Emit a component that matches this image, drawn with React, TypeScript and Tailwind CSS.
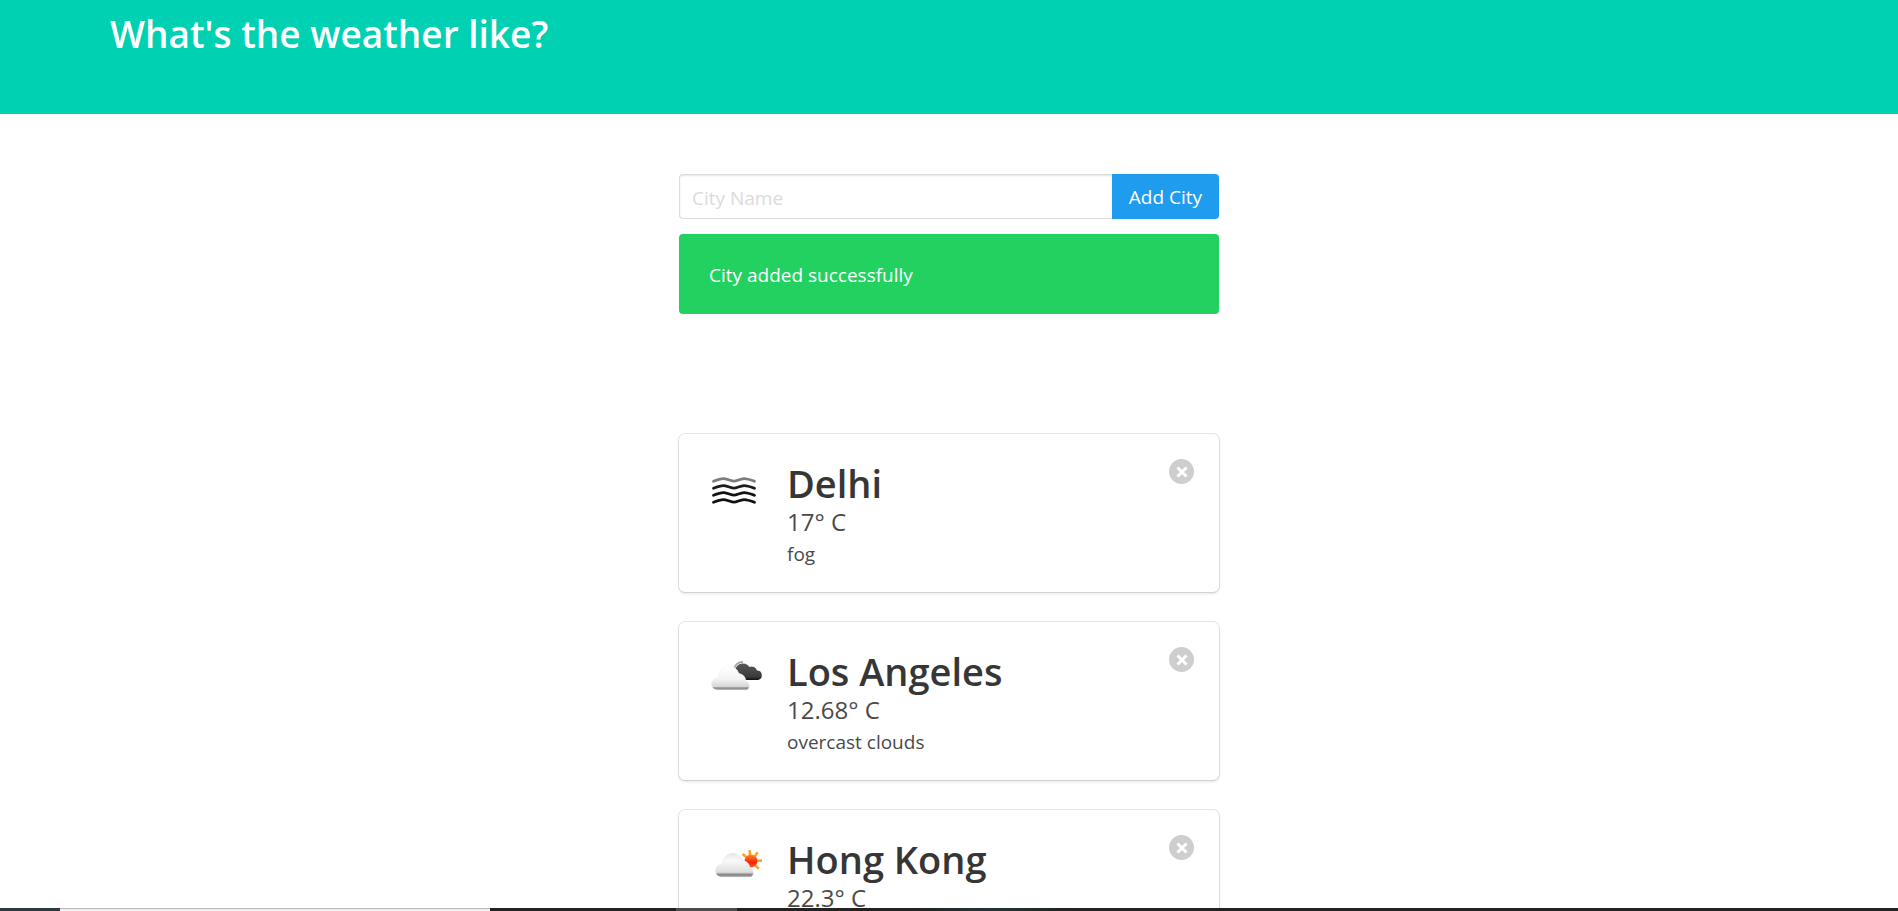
import React from "react";

type Icon = "fog" | "overcast" | "partly";
type City = { name: string; temp: string; text: string; icon: Icon };

const cities: City[] = [
  { name: "Delhi", temp: "17° C", text: "fog", icon: "fog" },
  { name: "Los Angeles", temp: "12.68° C", text: "overcast clouds", icon: "overcast" },
  { name: "Hong Kong", temp: "22.3° C", text: "scattered clouds", icon: "partly" },
];

function FogIcon() {
  const wave = "M4.500 1.200 C9 -0.6 12 -1.600 15 -1.400 C19 -1 22 1.200 25 1.200 C28 1.200 31 -1.200 35 -1.400 C38 -1.500 41 -0.400 45.500 1.200";
  return (
    <svg viewBox="0 0 58 58" className="size-[58px]" fill="none" strokeLinecap="round" strokeWidth="2.8" aria-hidden="true">
      <path d={wave} transform="translate(0 16)" stroke="#7d7d7d" />
      <path d={wave} transform="translate(0 23)" stroke="#1c1c1c" />
      <path d={wave} transform="translate(0 30)" stroke="#111" />
      <path d={wave} transform="translate(0 37)" stroke="#111" />
    </svg>
  );
}

const cloud =
  "M8 29 A6 6 0 0 1 2.500 22 A8 8 0 0 1 9.500 16 A10.500 10.500 0 0 1 30 12.500 A8 8 0 0 1 37 20 A5 5 0 0 1 38 29 Z";

function OvercastIcon() {
  return (
    <svg viewBox="0 0 58 58" className="size-[58px]" aria-hidden="true">
      <defs>
        <linearGradient id="overcast-front" x1="0" y1="0" x2="0" y2="1">
          <stop offset="0" stopColor="#fff" />
          <stop offset="0.55" stopColor="#f3f3f3" />
          <stop offset="0.86" stopColor="#d6d6d6" />
          <stop offset="0.91" stopColor="#8c8c8c" />
          <stop offset="1" stopColor="#a2a2a2" />
        </linearGradient>
        <linearGradient id="overcast-back" x1="0" y1="0" x2="0" y2="1">
          <stop offset="0" stopColor="#5a5a5a" />
          <stop offset="0.8" stopColor="#3a3a3a" />
          <stop offset="1" stopColor="#111" />
        </linearGradient>
      </defs>
      <path d="M26 21 A8 8 0 0 1 40.500 15 A5.500 5.500 0 0 1 48 18.500 A4.800 4.800 0 0 1 49 28 H34 Z" fill="url(#overcast-back)" />
      <path d="M25 19 C25 14 28 10 34 10" fill="none" stroke="#a8a8a8" strokeWidth="2" />
      <path d={cloud} transform="translate(0 9)" fill="url(#overcast-front)" stroke="#f0f0f0" strokeWidth="0.5" />
    </svg>
  );
}

function PartlyIcon() {
  return (
    <svg viewBox="0 0 58 58" className="size-[58px]" aria-hidden="true">
      <defs>
        <linearGradient id="partly-cloud" x1="0" y1="0" x2="0" y2="1">
          <stop offset="0" stopColor="#e6e6e6" />
          <stop offset="0.3" stopColor="#fafafa" />
          <stop offset="0.8" stopColor="#dedede" />
          <stop offset="0.9" stopColor="#858585" />
          <stop offset="1" stopColor="#a5a5a5" />
        </linearGradient>
        <linearGradient id="partly-sun" x1="0" y1="0" x2="0" y2="1">
          <stop offset="0" stopColor="#ff8a1c" />
          <stop offset="0.6" stopColor="#f8230c" />
          <stop offset="1" stopColor="#ff5a1c" />
        </linearGradient>
      </defs>
      <g transform="translate(42 21)">
        <g stroke="#ffa02e" strokeWidth="2.6">
          <path d="M0 -6V-11" transform="rotate(-50)" />
          <path d="M0 -6V-11" transform="rotate(-8)" />
          <path d="M0 -6V-11" transform="rotate(38)" />
          <path d="M0 -6V-11" transform="rotate(88)" />
          <path d="M0 -6V-11" transform="rotate(135)" />
        </g>
        <circle r="6.400" fill="url(#partly-sun)" />
      </g>
      <path d={cloud} transform="translate(4 8)" fill="url(#partly-cloud)" stroke="#e6e6e6" strokeWidth="0.5" />
    </svg>
  );
}

const icons: Record<Icon, () => React.JSX.Element> = {
  fog: FogIcon,
  overcast: OvercastIcon,
  partly: PartlyIcon,
};

function CityCard({ city }: { city: City }) {
  const Drawing = icons[city.icon];
  return (
    <article className="flex items-start rounded-md bg-white px-[30px] pt-[30px] pb-6 shadow-[0_2px_3px_rgba(10,10,10,0.1),0_0_0_1px_rgba(10,10,10,0.1)]">
      <div className="mr-5 shrink-0">
        <Drawing />
      </div>
      <div className="min-w-0 grow">
        <h2 className="pb-0.5 text-[38px] leading-[38px] font-semibold text-[#363636]">{city.name}</h2>
        <p className="text-2xl leading-9 text-[#4a4a4a]">{city.temp}</p>
        <p className="text-[19px] leading-7 text-[#4a4a4a]">{city.text}</p>
      </div>
      <button
        type="button"
        aria-label={`Remove ${city.name}`}
        className="-mt-[5px] -mr-[5px] flex size-[25px] shrink-0 items-center justify-center rounded-full bg-[#cecece]"
      >
        <svg viewBox="0 0 12 12" className="size-3" stroke="#fff" strokeWidth="3" aria-hidden="true">
          <path d="M1.500 1.500 10.500 10.500M10.500 1.500 1.500 10.500" />
        </svg>
      </button>
    </article>
  );
}

export default function App() {
  return (
    <div className="h-screen overflow-hidden bg-white font-['Open_Sans','Noto_Sans',sans-serif] text-[19px] text-[#4a4a4a]">
      <header className="bg-[#00d1b2] px-[110px] pt-[11px] pb-[58px]">
        <h1 className="text-[37px] leading-[45px] font-semibold text-white">What's the weather like?</h1>
      </header>

      <main className="mx-auto max-w-[540px] pt-[60px]">
        <form className="flex" onSubmit={(e) => e.preventDefault()}>
          <input
            type="text"
            aria-label="City Name"
            placeholder="City Name"
            className="h-[45px] min-w-0 grow rounded-l border border-r-0 border-[#dbdbdb] px-3 pt-0.5 shadow-[inset_0_1px_2px_rgba(10,10,10,0.1)] outline-none placeholder:text-[#dbdbdb]"
          />
          <button type="submit" className="h-[45px] w-[107px] shrink-0 rounded-r bg-[#209cee] pt-0.5 text-white">
            Add City
          </button>
        </form>

        <p role="status" className="mt-[15px] rounded bg-[#23d160] px-[30px] pt-[26px] pb-6 leading-[30px] text-white">
          City added successfully
        </p>

        <section className="mt-[120px] flex flex-col gap-[30px]">
          {cities.map((city) => (
            <CityCard key={city.name} city={city} />
          ))}
        </section>
      </main>

      <div aria-hidden="true" className="fixed inset-x-0 bottom-0 flex h-[3px] bg-[#222]">
        <div className="w-[60px] bg-[#2b3b3e]" />
        <div className="w-[430px] border-t border-[#b8b8b8] bg-[#f0f0f0]" />
        <div className="w-[186px]" />
        <div className="w-[61px] bg-[#4d4d4d]" />
        <div className="w-[173px]" />
        <div className="w-[160px] bg-linear-to-r from-[#222] via-[#243436] to-[#222]" />
      </div>
    </div>
  );
}
